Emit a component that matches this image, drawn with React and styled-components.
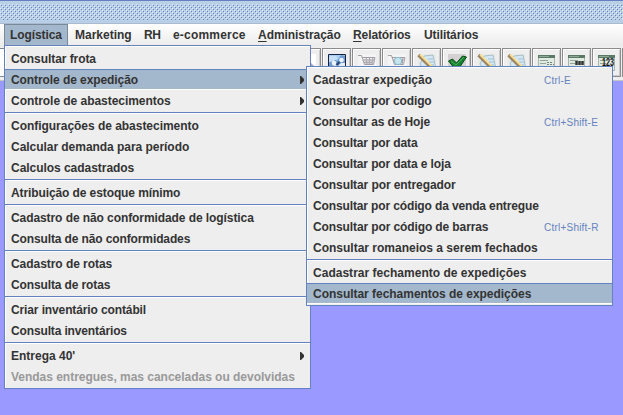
import React from 'react';
import styled, { createGlobalStyle, css } from 'styled-components';

const Global = createGlobalStyle`
  * { box-sizing: border-box; }
  body { margin: 0; overflow: hidden; background: #9999ff; font: bold 12px/15px "Liberation Sans", Arial, sans-serif; color: #333; }
`;
const Window = styled.main`
  position: relative; width: 623px; height: 415px; overflow: hidden; background: #9999ff;
`;
const TitleBar = styled.header`
  height: 24px; padding: 3px 0; background: #b8cfe5;
  border-top: 1px solid #6382bf; border-bottom: 1px solid #a9bccf;
`;
const Bumps = styled.svg`display: block; width: 100%; height: 16px;`;
const MenuBar = styled.nav`
  display: flex; height: 22px; padding-left: 4px;
  background: linear-gradient(#fff, #ebebeb);
`;
const MenuTitle = styled.span`
  flex: none; width: ${p => p.$w}px; height: 22px; padding: 4px 0 0 6px; white-space: nowrap;
  ${p => p.$open && css`
    margin-right: 1px; background: #a3b8cc; border: 1px solid #7a8a99; border-bottom: 0; padding: 3px 0 0 5px;
  `}
`;
const TextRun = styled.span`
  display: inline-block; white-space: nowrap; letter-spacing: ${p => p.$ls || 0}px;
`;
const Mnemonic = styled.span`text-decoration: underline; text-underline-offset: 2px; text-decoration-thickness: 1px;`;
const ToolBar = styled.div`
  display: flex; gap: 1px; height: 35px; padding-top: 2px; background: #eee; border-bottom: 1px solid #c5c5c5;
`;
const ToolField = styled.span`
  flex: none; width: 291px; height: 29px; background: #fff; border: solid #7a8a99; border-width: 1px 0;
`;
const ToolButton = styled.span`
  flex: none; width: 29px; height: 29px; padding: 4px 0 0 4px; border: 1px solid #8c8c8c;
  box-shadow: inset 1px 1px #fff, inset -1px -1px #ccc; background: #eee;
  svg { display: block; }
`;
const Popup = styled.div`
  position: absolute; left: ${p => p.$x}px; top: ${p => p.$y}px; width: 307px;
  padding: 2px 0 1px; background: #eee; border: 1px solid #6382bf;
  box-shadow: inset 1px 1px #fff;
`;
const Item = styled.div`
  display: flex; align-items: center; height: 21px; padding: 2px 6px 0; white-space: nowrap;
  color: ${p => (p.$off ? '#999' : '#333')};
  ${p => p.$on && css`background: #a3b8cc; border-top: 1px solid #6382bf; border-bottom: 1px solid #fff;`}
`;
const Separator = styled.div`
  height: 4px; padding-top: 1px;
  &::before { content: ''; display: block; height: 2px; background: linear-gradient(#6382bf 50%, #fff 50%); }
`;
const Shortcut = styled.span`
  width: 62px; margin-left: auto; font-size: 10px; font-weight: 400; color: #6382bf; letter-spacing: 0.22px;
`;
const Arrow = styled.svg`margin: -2px 0 0 auto; flex: none;`;

function Glyph({ kind }) {
  return (
    <svg width="20" height="20" viewBox="0 0 20 20">
      {kind === 'people' && <>
        <path d="M1.5 1.5h17v17h-17z" fill="#a9cdf0" stroke="#18213d" />
        <path d="M2 10q5-6 8-2l4-6 4 1v15H2z" fill="#6d9bcf" />
        <path d="M2 4q6-3 9 1l-4 3-5 1z" fill="#c8e0f6" />
        <circle cx="7" cy="10" r="2.3" fill="#eef3fa" /><circle cx="14.5" cy="7" r="2.3" fill="#eef3fa" />
        <path d="M3 15q4-5 8-2l3-3h4v8H3z" fill="#e6edf4" /><path d="M9 11l3-3 1 2-3 3z" fill="#2b456f" />
      </>}
      {kind.startsWith('cart') && <>
        <rect x="1" y="1" width="18" height="18" fill="#f4f4f4" />
        <path d="M1 2.5h3.5l3 9h9l1.5-7H5M6 7h11M7 9.5h9M9 4l1 7M12.5 4v7M16 4l-1 7" fill="none" stroke="#a29da4" />
        {kind === 'cart' && <path d="M7 6h10l-1 5H8z" fill="#b9b5bb" opacity=".5" />}
        {kind === 'cartSearch' && <circle cx="11" cy="8" r="3.7" fill="#c5e5ef" stroke="#8bbccc" />}
      </>}
      {kind === 'edit' && <>
        <path d="M1 1h18v18H1z" fill="#e9ece6" />
        <path d="M7 3l9-1 3 14-11 3-5-8z" fill="#d4e8f5" stroke="#a6bdc9" />
        <path d="M11 6h5M12 9h5M10 12h7M11 15h6" stroke="#a3c2d4" />
        <path d="M1.5 2l13 13" stroke="#9a8460" strokeWidth="3.4" /><path d="M3 1.5l12 12" stroke="#f7dc92" strokeWidth="2" />
      </>}
      {kind === 'check' && <>
        <path d="M1 1h18v18H1z" fill="#d4d0d4" />
        <path d="M1.5 8l4-2 4 4 6-7 4 1-8 12H8z" fill="#168330" stroke="#0b4b18" />
        <path d="M4 8l5 4 8-8" fill="none" stroke="#4fae59" />
      </>}
      {['form', 'barcode', 'number'].includes(kind) && <>
        <path d="M1.5 2.5h16v15h-16z" fill="#e0eae2" stroke="#a7b5aa" />
        <path d="M1 2h17v3H1z" fill="#587963" /><path d="M2 3.5h10" stroke="#8ba894" /><path d="M3 7.5h8M3 10.5h6" stroke="#91a697" />
        {kind === 'form' && <path d="M10 9.5h6M10 11.5h7" stroke="#78857b" strokeDasharray="2 1" />}
        {kind === 'barcode' && <path d="M8 8h9v4H8z" fill="#59625c" />}
        {kind === 'barcode' && <path d="M9.5 8v4m3-4v4m3-4v4" stroke="#2c302d" />}
        {kind === 'number' && <text x="5" y="13" fontFamily="Liberation Sans" fontWeight="700" fontSize="10" textLength="12" lengthAdjust="spacingAndGlyphs" fill="#111">123</text>}
      </>}
      {kind === 'person' && <>
        <path d="M1 1h18v18H1z" fill="#fff" /><path d="M11 7l8 8v4h-8z" fill="#a5a1b5" />
      </>}
    </svg>
  );
}
const titles = [
  { t: 'Logística', w: 64, open: true, ls: -0.1 }, { t: 'Marketing', w: 69 }, { t: 'RH', w: 29, ls: -0.4 },
  { t: 'e-commerce', w: 85, ls: 0.2 }, { t: 'Administração', w: 95, m: true, ls: -0.05 },
  { t: 'Relatórios', w: 71, m: true, ls: -0.1 }, { t: 'Utilitários', w: 66, ls: -0.1 },
];
const tools = ['person', 'people', 'cart', 'cartSearch', 'edit', 'check', 'edit', 'edit', 'form', 'barcode', 'number', 'none'];
const mainItems = [
  { t: 'Consultar frota', ls: -0.07 }, { t: 'Controle de expedição', on: true, sub: true, ls: -0.08 },
  { t: 'Controle de abastecimentos', sub: true, ls: -0.04 }, null,
  { t: 'Configurações de abastecimento', ls: -0.03 }, { t: 'Calcular demanda para período', ls: -0.04 },
  { t: 'Calculos cadastrados', ls: -0.04 }, null,
  { t: 'Atribuição de estoque mínimo', ls: -0.1 }, null,
  { t: 'Cadastro de não conformidade de logística', ls: -0.08 }, { t: 'Consulta de não conformidades', ls: -0.12 }, null,
  { t: 'Cadastro de rotas', ls: -0.05 }, { t: 'Consulta de rotas', ls: -0.12 }, null,
  { t: 'Criar inventário contábil', ls: -0.12 }, { t: 'Consulta inventários', ls: -0.14 }, null,
  { t: "Entrega 40'", sub: true }, { t: 'Vendas entregues, mas canceladas ou devolvidas', off: true, ls: -0.02 },
];
const subItems = [
  { t: 'Cadastrar expedição', key: 'Ctrl-E', ls: 0.06 }, { t: 'Consultar por codigo', ls: -0.14 },
  { t: 'Consultar as de Hoje', key: 'Ctrl+Shift-E', ls: -0.12 },
  { t: 'Consultar por data', ls: -0.12 }, { t: 'Consultar por data e loja', ls: -0.12 }, { t: 'Consultar por entregador', ls: -0.09 },
  { t: 'Consultar por código da venda entregue', ls: -0.13 }, { t: 'Consultar por código de barras', key: 'Ctrl+Shift-R', ls: -0.11 },
  { t: 'Consultar romaneios a serem fechados' }, null,
  { t: 'Cadastrar fechamento de expedições', ls: 0.02 }, { t: 'Consultar fechamentos de expedições', on: true, ls: -0.03 },
];
function Menu({ items, x, y }) {
  return (
    <Popup $x={x} $y={y}>
      {items.map((i, n) => i ? (
        <Item key={n} $on={i.on} $off={i.off}>
          <TextRun $ls={i.ls}>{i.t}</TextRun>
          {i.key && <Shortcut>{i.key}</Shortcut>}
          {i.sub && <Arrow width="4" height="8" viewBox="0 0 4 8"><path d="M0 0h1l3 3v2l-3 3h-1z" fill="#333" /></Arrow>}
        </Item>
      ) : <Separator key={n} />)}
    </Popup>
  );
}
export default function App() {
  return (
    <>
      <Global />
      <Window>
        <TitleBar>
          <Bumps shapeRendering="crispEdges">
            <defs>
              <pattern id="bumps" width="4" height="4" patternUnits="userSpaceOnUse">
                <path d="M0 0h1v1H0zM2 2h1v1H2z" fill="#e4eef8" />
                <path d="M1 1h1v1H1zM3 3h1v1H3z" fill="#6382bf" />
              </pattern>
            </defs>
            <rect width="623" height="16" fill="url(#bumps)" />
          </Bumps>
        </TitleBar>
        <MenuBar>
          {titles.map(i => (
            <MenuTitle key={i.t} $w={i.w} $open={i.open}>
              <TextRun $ls={i.ls}>{i.m ? <><Mnemonic>{i.t[0]}</Mnemonic>{i.t.slice(1)}</> : i.t}</TextRun>
            </MenuTitle>
          ))}
        </MenuBar>
        <ToolBar>
          <ToolField />
          {tools.map((k, n) => <ToolButton key={n}><Glyph kind={k} /></ToolButton>)}
        </ToolBar>
        <Menu items={mainItems} x={4} y={45} />
        <Menu items={subItems} x={306} y={66} />
      </Window>
    </>
  );
}
